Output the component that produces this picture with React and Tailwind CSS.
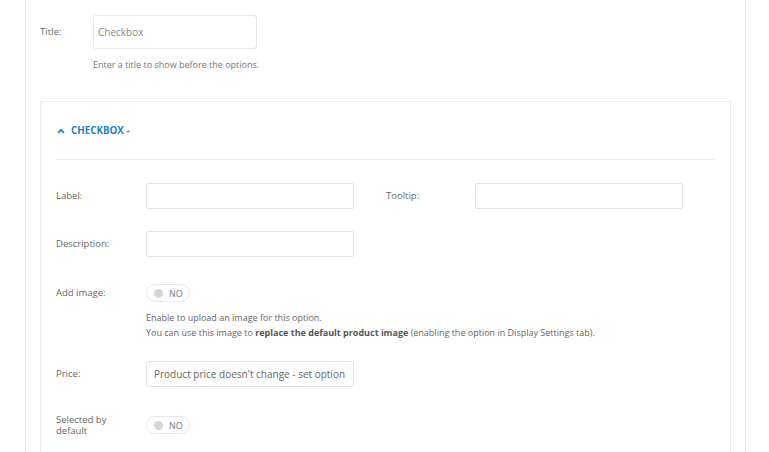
import React from "react";

function Toggle() {
  return (
    <div className="flex h-[18px] w-[44px] items-center rounded-full border border-[#e6e6e6] bg-white pl-[7px]">
      <span className="h-[9px] w-[9px] rounded-full bg-[#d5d5d5]" />
      <span className="ml-[6px] text-[9px] leading-none text-[#777]">NO</span>
    </div>
  );
}

function Input({ children }) {
  return (
    <div className="flex h-[26px] w-[208px] items-center overflow-hidden rounded-[2px] border border-[#e3e3e3] bg-white px-[7px] text-[11px] text-[#777]">
      {children}
    </div>
  );
}

export default function App() {
  return (
    <div
      className="h-[452px] w-full overflow-hidden bg-white text-[#666]"
      style={{ fontFamily: '"Open Sans", "Noto Sans", sans-serif' }}
    >
      <div className="ml-[25px] h-full w-[721px] border-x border-[#eeeeee] pl-[14px] pt-[15px]">
        {/* Title */}
        <div className="flex items-center">
          <div className="w-[53px] text-[9.5px] text-[#666]">Title:</div>
          <div className="flex h-[34px] w-[164px] items-center rounded-[3px] border border-[#e6e6e6] bg-white px-[4px] text-[10px] text-[#888]">
            Checkbox
          </div>
        </div>
        <div className="ml-[53px] mt-[9px] text-[9px] leading-[14px] text-[#777]">
          Enter a title to show before the options.
        </div>

        {/* Inner box */}
        <div className="mt-[29px] h-[400px] w-[691px] border border-[#ececec] bg-white pl-[15px] pr-[15px] pt-[21px]">
          <div className="flex h-[16px] items-center gap-[6px] text-[#1f7fc0]">
            <svg width="8" height="6" viewBox="0 0 8 6" className="ml-[1px]">
              <path d="M1 5 L4 1.8 L7 5" fill="none" stroke="currentColor" strokeWidth="1.8" />
            </svg>
            <span className="text-[9.8px] font-bold">CHECKBOX -</span>
          </div>
          <div className="mt-[20px] h-px w-full bg-[#ececec]" />

          {/* Label / Tooltip */}
          <div className="mt-[23px] flex items-center">
            <div className="w-[90px] text-[9.5px]">Label:</div>
            <Input />
            <div className="ml-[32px] w-[89px] text-[9.5px]">Tooltip:</div>
            <Input />
          </div>

          {/* Description */}
          <div className="mt-[22px] flex items-center">
            <div className="w-[90px] text-[9.5px]">Description:</div>
            <Input />
          </div>

          {/* Add image */}
          <div className="mt-[27px] flex items-center">
            <div className="w-[90px] text-[9.5px]">Add image:</div>
            <Toggle />
          </div>
          <div className="ml-[90px] mt-[8px] text-[9px] leading-[15px] text-[#666]">
            <div>Enable to upload an image for this option.</div>
            <div>
              You can use this image to{" "}
              <span className="font-bold text-[#555]">replace the default product image</span> (enabling the
              option in Display Settings tab).
            </div>
          </div>

          {/* Price */}
          <div className="mt-[21px] flex items-center">
            <div className="w-[90px] text-[9.5px]">Price:</div>
            <Input>
              <span className="whitespace-nowrap text-[10px] text-[#666]">
                Product price doesn't change - set option
              </span>
            </Input>
          </div>

          {/* Selected by default */}
          <div className="mt-[27px] flex items-center">
            <div className="w-[90px] text-[9.5px] leading-[11px]">
              Selected by
              <br />
              default
            </div>
            <Toggle />
          </div>
        </div>
      </div>
    </div>
  );
}
